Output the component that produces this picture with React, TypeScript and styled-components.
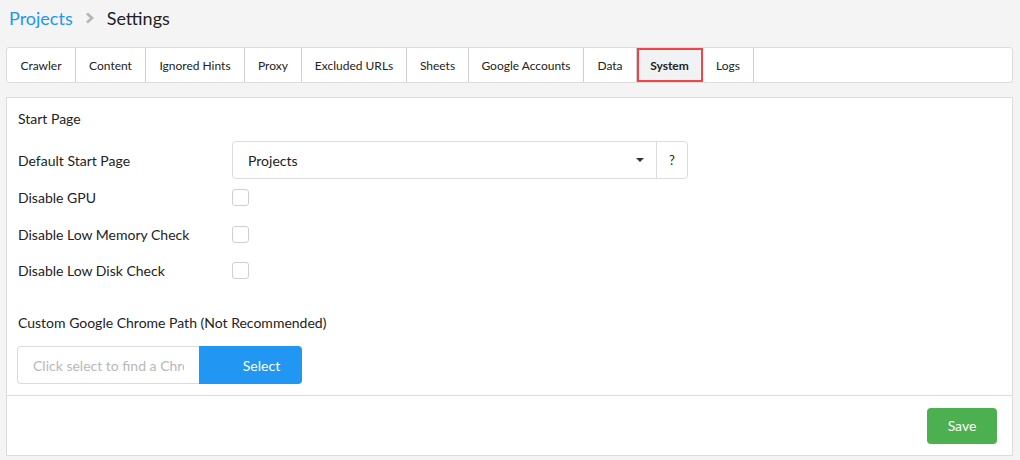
import React from "react";
import styled, { createGlobalStyle } from "styled-components";

const Global = createGlobalStyle`
  html, body { margin: 0; padding: 0; background: #f4f4f4; }
  body { font-family: Lato, "Open Sans", sans-serif; color: #222; }
  * { box-sizing: border-box; }
`;

const Page = styled.div`
  padding: 0 7px 0 6px;
  width: 1020px;
  height: 460px;
  display: flex;
  flex-direction: column;
`;

const Breadcrumb = styled.div`
  display: flex;
  align-items: center;
  height: 35px;
  padding-left: 3px;
  font-size: 18px;
  gap: 12px;
`;

const Crumb = styled.span<{ $link?: boolean }>`
  color: ${(p) => (p.$link ? "#2196f3" : "#222")};
`;

const TabBar = styled.div`
  margin-top: 12px;
  height: 36px;
  display: flex;
  background: #fff;
  border: 1px solid #dcdcdc;
  border-radius: 3px;
`;

const Tab = styled.div<{ $active?: boolean; $w: number }>`
  display: flex;
  align-items: center;
  justify-content: center;
  width: ${(p) => p.$w}px;
  font-size: 12px;
  color: #222;
  border-right: 1px solid #cfcfcf;
  font-weight: ${(p) => (p.$active ? 700 : 400)};
  background: ${(p) => (p.$active ? "#f1f2f4" : "transparent")};
  outline: ${(p) => (p.$active ? "2px solid #f44346" : "none")};
  outline-offset: -2px;
`;

const Panel = styled.div`
  margin-top: 14px;
  height: 359px;
  background: #fff;
  border: 1px solid #dcdcdc;
  display: flex;
  flex-direction: column;
`;

const Body = styled.div`
  flex: 1;
  padding: 12px 11px 0 11px;
  display: flex;
  flex-direction: column;
  border-bottom: 1px solid #dcdcdc;
`;

const SectionTitle = styled.div`
  font-size: 14px;
  height: 18px;
  line-height: 18px;
  margin-bottom: 13px;
`;

const Row = styled.div<{ $h: number }>`
  display: grid;
  grid-template-columns: 214px 456px;
  align-items: center;
  height: ${(p) => p.$h}px;
  font-size: 14px;
`;

const SelectGroup = styled.div`
  display: flex;
  height: 38px;
  border: 1px solid #dcdcdc;
  border-radius: 4px;
`;

const SelectBox = styled.div`
  flex: 1;
  display: flex;
  align-items: center;
  justify-content: space-between;
  padding: 0 12px 0 15px;
  font-size: 14px;
`;

const Caret = styled.span`
  width: 0;
  height: 0;
  border-left: 4px solid transparent;
  border-right: 4px solid transparent;
  border-top: 4px solid #333;
`;

const Addon = styled.div`
  width: 31px;
  border-left: 1px solid #dcdcdc;
  display: flex;
  align-items: center;
  justify-content: center;
  font-size: 13px;
`;

const Check = styled.span`
  width: 17px;
  height: 17px;
  border: 1px solid #cfcfcf;
  border-radius: 3px;
  background: #fff;
`;

const ChromeLabel = styled.div`
  margin-top: 26px;
  font-size: 14px;
  height: 18px;
  line-height: 18px;
`;

const PathGroup = styled.div`
  margin-top: 14px;
  display: flex;
  width: 285px;
  height: 38px;
  margin-left: -1px;
`;

const PathInput = styled.input`
  width: 182px;
  border: 1px solid #dcdcdc;
  border-right: none;
  border-radius: 4px 0 0 4px;
  padding: 0 15px;
  font-family: Lato, "Open Sans", sans-serif;
  font-size: 14px;
  outline: none;
  &::placeholder { color: #b8b8b8; }
`;

const BlueButton = styled.div`
  flex: 1;
  background: #2196f3;
  color: #fff;
  border-radius: 0 4px 4px 0;
  display: flex;
  align-items: center;
  justify-content: center;
  padding-left: 22px;
  font-size: 14px;
`;

const Footer = styled.div`
  height: 59px;
  display: flex;
  justify-content: flex-end;
  align-items: center;
  padding-right: 15px;
`;

const SaveButton = styled.div`
  width: 70px;
  height: 36px;
  background: #4caf50;
  color: #fff;
  border-radius: 4px;
  display: flex;
  align-items: center;
  justify-content: center;
  font-size: 14px;
`;

const tabs: [string, number][] = [
  ["Crawler", 69],
  ["Content", 70],
  ["Ignored Hints", 99],
  ["Proxy", 57],
  ["Excluded URLs", 105],
  ["Sheets", 62],
  ["Google Accounts", 115],
  ["Data", 53],
  ["System", 66],
  ["Logs", 51],
];

export default function App() {
  return (
    <>
      <Global />
      <Page>
        <Breadcrumb>
          <Crumb $link>Projects</Crumb>
          <svg width="10" height="12" viewBox="0 0 10 12">
            <path d="M2 1.5 L7 6 L2 10.5" fill="none" stroke="#b5b5b5" strokeWidth="2.6" />
          </svg>
          <Crumb>Settings</Crumb>
        </Breadcrumb>
        <TabBar>
          {tabs.map(([t, w]) => (
            <Tab key={t} $w={w} $active={t === "System"}>
              {t}
            </Tab>
          ))}
        </TabBar>
        <Panel>
          <Body>
            <SectionTitle>Start Page</SectionTitle>
            <Row $h={38}>
              <span>Default Start Page</span>
              <SelectGroup>
                <SelectBox>
                  <span>Projects</span>
                  <Caret />
                </SelectBox>
                <Addon>?</Addon>
              </SelectGroup>
            </Row>
            <Row $h={37}>
              <span>Disable GPU</span>
              <Check />
            </Row>
            <Row $h={36}>
              <span>Disable Low Memory Check</span>
              <Check />
            </Row>
            <Row $h={36}>
              <span>Disable Low Disk Check</span>
              <Check />
            </Row>
            <ChromeLabel>Custom Google Chrome Path (Not Recommended)</ChromeLabel>
            <PathGroup>
              <PathInput readOnly placeholder="Click select to find a Chrome executable" />
              <BlueButton>Select</BlueButton>
            </PathGroup>
          </Body>
          <Footer>
            <SaveButton>Save</SaveButton>
          </Footer>
        </Panel>
      </Page>
    </>
  );
}
